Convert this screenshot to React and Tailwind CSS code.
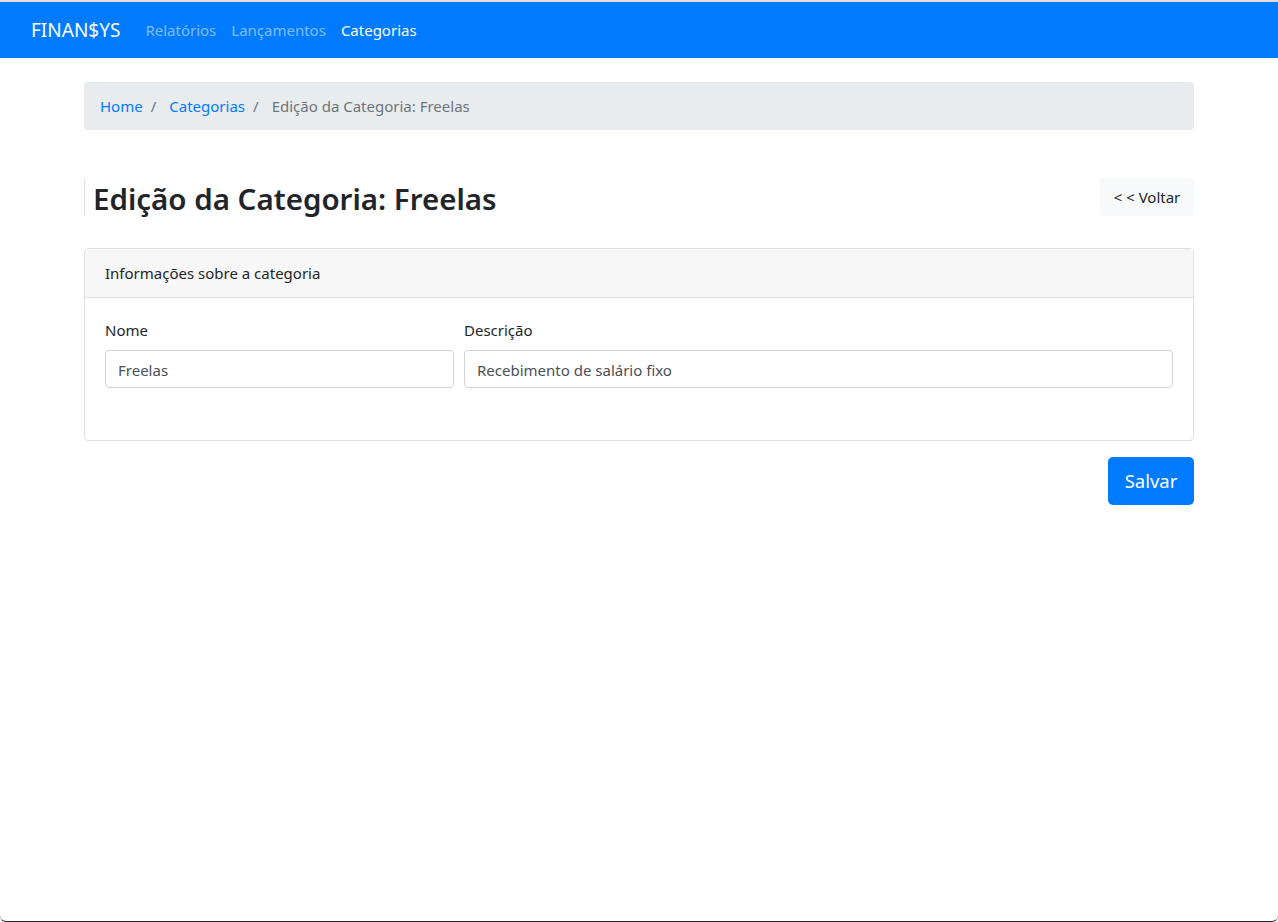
import React, { useState } from 'react';

const font = { fontFamily: '"Noto Sans", "Open Sans", sans-serif' };

const NavBar = () => (
  <nav className="flex h-[56px] items-center bg-[#007bff] px-[31px]">
    <span className="mr-[17px] text-[19px] leading-[30px] text-white">FINAN$YS</span>
    <div className="flex items-center">
      <a className="px-2 text-[15px] text-white/50">Relatórios</a>
      <a className="px-[7px] text-[15px] text-white/50">Lançamentos</a>
      <a className="px-2 text-[15px] text-white">Categorias</a>
    </div>
  </nav>
);

export default function App() {
  const [nome, setNome] = useState('Freelas');
  const [descricao, setDescricao] = useState('Recebimento de salário fixo');

  return (
    <div
      className="flex h-[922px] flex-col overflow-hidden rounded-b-[6px] border-t-2 border-b border-t-[#dedede] border-b-[#2b2b2b] bg-white text-[#212529]"
      style={font}
    >
      <NavBar />

      <div className="mx-auto w-[1110px]">
        <ol className="mt-6 flex h-[48px] items-center rounded bg-[#e9ecef] px-4 text-[15px]">
          <li className="text-[#007bff]">Home</li>
          <li className="pr-[13px] pl-2 text-[#6c757d]">/</li>
          <li className="text-[#007bff]">Categorias</li>
          <li className="pr-[13px] pl-2 text-[#6c757d]">/</li>
          <li className="text-[#6c757d]">Edição da Categoria: Freelas</li>
        </ol>

        <div className="mt-12 flex items-center justify-between">
          <h1 className="flex h-[38px] items-center border-l border-[#dee2e6] pt-[3px] pl-2 text-[29.5px] font-semibold leading-none">
            Edição da Categoria: Freelas
          </h1>
          <button className="h-[38px] w-[94px] rounded bg-[#f8f9fa] text-[15px] text-[#212529]">
            &lt; &lt; Voltar
          </button>
        </div>

        <div className="mt-8 rounded border border-[#dfdfdf]">
          <div className="flex h-[49px] items-center border-b border-[#dfdfdf] bg-[#f7f7f7] px-5 text-[15px]">
            Informações sobre a categoria
          </div>
          <div className="px-5 pt-5 pb-[52px]">
            <div className="grid grid-cols-[349px_1fr] gap-x-[10px]">
              <div>
                <label className="mb-2 block text-[15px] leading-6">Nome</label>
                <input
                  value={nome}
                  onChange={(e) => setNome(e.target.value)}
                  className="h-[38px] w-full rounded border border-[#ced4da] px-3 pt-[2px] text-[15px] text-[#495057] outline-none"
                />
              </div>
              <div>
                <label className="mb-2 block text-[15px] leading-6">Descrição</label>
                <input
                  value={descricao}
                  onChange={(e) => setDescricao(e.target.value)}
                  className="h-[38px] w-full rounded border border-[#ced4da] px-3 pt-[2px] text-[15px] text-[#495057] outline-none"
                />
              </div>
            </div>
          </div>
        </div>

        <div className="mt-4 flex justify-end">
          <button className="h-[48px] w-[86px] rounded-[5px] bg-[#007bff] text-[18.5px] text-white">
            Salvar
          </button>
        </div>
      </div>
    </div>
  );
}
